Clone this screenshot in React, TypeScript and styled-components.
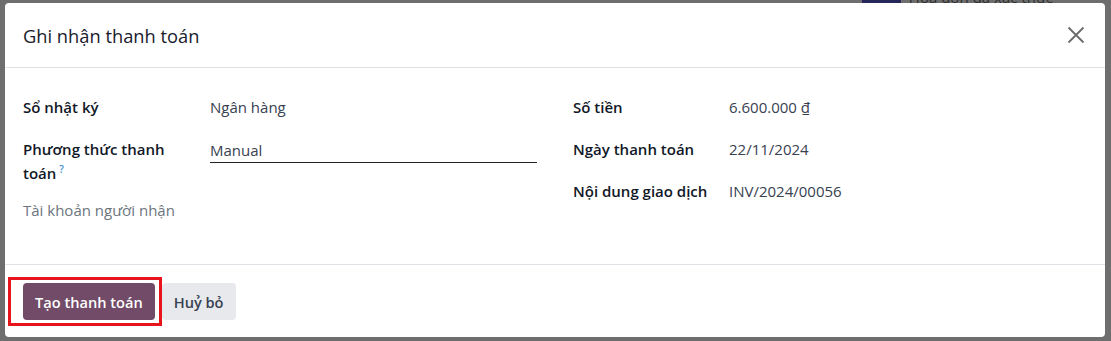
import React from 'react';
import styled, {createGlobalStyle} from 'styled-components';

const GlobalStyle = createGlobalStyle`
  html, body {
    margin: 0;
    padding: 0;
  }
  body {
    font-family: "Open Sans", "Noto Sans", "Liberation Sans", sans-serif;
    background: #6e6e6e;
  }
`;

const Backdrop = styled.div`
  position: relative;
  width: 1111px;
  height: 341px;
  overflow: hidden;
  background: #6e6e6e;
`;

// the page behind the dialog, only its edges show
const PageBehind = styled.div`
  display: flex;
  justify-content: flex-end;
  align-items: flex-end;
  gap: 8px;
  height: 4px;
  padding-right: 58px;
  overflow: hidden;
`;

const Badge = styled.span`
  width: 39px;
  height: 14px;
  background: #26265a;
`;

const BehindText = styled.span`
  font-size: 15px;
  line-height: 14px;
  color: #2e2e2e;
  white-space: nowrap;
`;

const Modal = styled.div`
  position: absolute;
  left: 5px;
  top: 3px;
  right: 6px;
  bottom: 4px;
  display: flex;
  flex-direction: column;
  background: #fff;
  border-radius: 4px;
`;

const Header = styled.div`
  display: flex;
  align-items: center;
  justify-content: space-between;
  height: 64px;
  padding: 0 17px 0 18px;
  border-bottom: 1px solid #dee2e6;
`;

const Title = styled.h4`
  margin: 0;
  font-size: 18.3px;
  font-weight: 500;
  color: #1a202c;
`;

const CloseButton = styled.button`
  display: flex;
  align-items: center;
  justify-content: center;
  width: 24px;
  height: 24px;
  padding: 0;
  border: none;
  background: transparent;
  cursor: pointer;
`;

const Body = styled.div`
  flex: 1;
  display: flex;
  gap: 36px;
  padding: 27px 18px 0 18px;
`;

const FieldGroup = styled.div<{ $labelWidth: number; $labelPad: number }>`
  flex: 1;
  display: grid;
  grid-template-columns: ${p => p.$labelWidth}px 1fr;
  row-gap: 13px;
  align-content: start;

  > .label {
    padding-right: ${p => p.$labelPad}px;
  }
`;

const Label = styled.div<{ $muted?: boolean }>`
  font-size: 15px;
  line-height: 24px;
  font-weight: ${p => (p.$muted ? 400 : 600)};
  color: ${p => (p.$muted ? '#6c757d' : '#111827')};
`;

const Help = styled.sup`
  font-size: 10px;
  line-height: 0;
  font-weight: 600;
  color: #3d8fd0;
  margin-left: 3px;
`;

const Value = styled.div`
  min-height: 29px;
  font-size: 15px;
  line-height: 24px;
  color: #374151;
`;

const Input = styled.div`
  line-height: 24px;
  padding-top: 1px;
  border-bottom: 1px solid #212529;
  color: #374151;
`;

const Footer = styled.div`
  display: flex;
  align-items: center;
  gap: 7px;
  padding: 18px 18px 17px 18px;
  border-top: 1px solid #dee2e6;
`;

const Highlight = styled.span`
  position: relative;
  display: inline-flex;

  &::after {
    content: '';
    position: absolute;
    top: -6px;
    bottom: -6px;
    left: -15px;
    right: -7px;
    border: 3px solid #e8141c;
    pointer-events: none;
  }
`;

const Button = styled.button<{ $primary?: boolean }>`
  height: 37px;
  padding: 0 12px;
  border: none;
  border-radius: 4px;
  font-family: inherit;
  font-size: 14.6px;
  font-weight: 600;
  background: ${p => (p.$primary ? '#714b67' : '#e7e9ed')};
  color: ${p => (p.$primary ? '#fff' : '#374151')};
  cursor: pointer;
`;

const CloseIcon = () => (
  <svg width="18" height="18" viewBox="0 0 18 18">
    <path d="M1.5 1.5 L16.5 16.5 M16.5 1.5 L1.5 16.5" stroke="#6b6b6b" strokeWidth="1.8" fill="none"/>
  </svg>
);

const App: React.FC = () => {
  return (
    <Backdrop>
      <GlobalStyle/>
      <PageBehind>
        <Badge/>
        <BehindText>Hoá đơn đã xác thực</BehindText>
      </PageBehind>
      <Modal>
        <Header>
          <Title>Ghi nhận thanh toán</Title>
          <CloseButton aria-label="Đóng"><CloseIcon/></CloseButton>
        </Header>
        <Body>
          <FieldGroup $labelWidth={187} $labelPad={24}>
            <Label className="label">Sổ nhật ký</Label>
            <Value>Ngân hàng</Value>
            <Label className="label">Phương thức thanh toán<Help>?</Help></Label>
            <Value><Input>Manual</Input></Value>
            <Label className="label" $muted>Tài khoản người nhận</Label>
            <Value/>
          </FieldGroup>
          <FieldGroup $labelWidth={156} $labelPad={4}>
            <Label className="label">Số tiền</Label>
            <Value>6.600.000 ₫</Value>
            <Label className="label">Ngày thanh toán</Label>
            <Value>22/11/2024</Value>
            <Label className="label">Nội dung giao dịch</Label>
            <Value>INV/2024/00056</Value>
          </FieldGroup>
        </Body>
        <Footer>
          <Highlight>
            <Button $primary>Tạo thanh toán</Button>
          </Highlight>
          <Button>Huỷ bỏ</Button>
        </Footer>
      </Modal>
    </Backdrop>
  );
};

export default App;
